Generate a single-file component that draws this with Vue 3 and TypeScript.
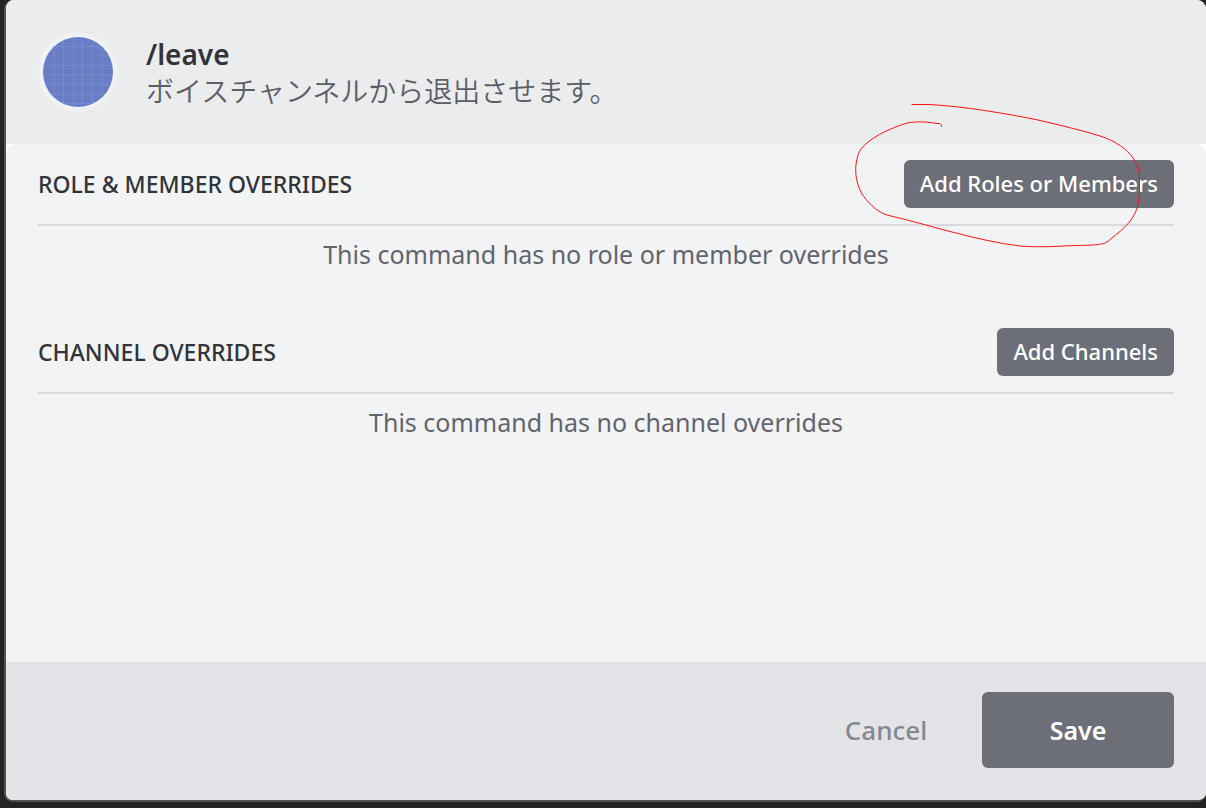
<script setup lang="ts">
import { ref } from 'vue'

interface OverrideSection {
  id: string
  title: string
  action: string
  empty: string
}

const command = ref({ name: '/leave', description: 'ボイスチャンネルから退出させます。' })

const sections: OverrideSection[] = [
  {
    id: 'roles',
    title: 'ROLE & MEMBER OVERRIDES',
    action: 'Add Roles or Members',
    empty: 'This command has no role or member overrides',
  },
  {
    id: 'channels',
    title: 'CHANNEL OVERRIDES',
    action: 'Add Channels',
    empty: 'This command has no channel overrides',
  },
]
</script>

<template>
  <div class="backdrop">
    <div class="dialog" role="dialog" aria-labelledby="command-name">
      <header class="header">
        <svg class="avatar" viewBox="0 0 80 80" aria-hidden="true">
          <defs>
            <clipPath id="avatar-clip"><circle cx="40" cy="40" r="35" /></clipPath>
          </defs>
          <circle cx="40" cy="40" r="39.5" fill="#eff1f4" />
          <g clip-path="url(#avatar-clip)">
            <rect width="80" height="80" fill="#687dc6" />
            <path
              d="M16 0V80M25.5 0V80M35.5 0V80M44.5 0V80M54.5 0V80M64 0V80M0 14.500H80M0 24H80M0 33.500H80M0 43H80M0 52.500H80M0 62H80M0 71.500H80"
              fill="none"
              stroke="#7a8dcc"
              stroke-opacity="0.8"
            />
          </g>
        </svg>
        <div class="heading">
          <h1 id="command-name" class="name">{{ command.name }}</h1>
          <p class="description" lang="ja">{{ command.description }}</p>
        </div>
      </header>

      <main class="body">
        <div class="content">
          <section v-for="section in sections" :key="section.id" class="section">
            <div class="section-head">
              <h2 class="section-title">{{ section.title }}</h2>
              <button type="button" class="button small">{{ section.action }}</button>
            </div>
            <p class="empty">{{ section.empty }}</p>
          </section>
        </div>
      </main>

      <footer class="footer">
        <button type="button" class="button cancel">Cancel</button>
        <button type="button" class="button save">Save</button>
      </footer>

      <svg class="scribble" viewBox="0 0 300 150" aria-hidden="true">
        <path
          d="M61.500 6.500H79C112 8 159 16 188 22C209 27 231 32 250 38C272 45 283 57 288 69Q289.500 73 289.500 79V94C289 106 287 112 283 119C276 130 264 138 257 144C252 148 231 147 214 148C198 149 181 149 170 148C127 143 76 126 37 117C26 114 16 102 12 96C5 83 4 70 8 57C13 41 44 29 57 25C69 23 78 24 87 25.500Q92 25 91.500 29"
        />
      </svg>
    </div>
  </div>
</template>

<style>
body {
  background: #232323;
}
</style>

<style scoped>
.backdrop {
  display: flex;
  box-sizing: border-box;
  min-height: 100vh;
  padding: 0 0 6px 4px;
  overflow: hidden;
  background: #232323;
  font-family: 'Noto Sans', 'Noto Sans CJK JP', sans-serif;
}

.dialog {
  position: relative;
  flex: 1;
  display: flex;
  flex-direction: column;
  border-left: 2px solid #525253;
  border-bottom: 2px solid #525253;
  border-radius: 9px;
  overflow: hidden;
  background: #fff;
}

.header {
  display: flex;
  align-items: center;
  gap: 28px;
  height: 144px;
  padding: 0 32px;
  background: #ebecee;
}

.avatar {
  width: 80px;
  height: 80px;
}

.name,
.description,
.section-title,
.empty {
  margin: 0;
}

.name {
  color: #313338;
  font-size: 28px;
  font-weight: 600;
  line-height: 36px;
}

.description {
  color: #5c5e66;
  font-family: 'Noto Sans CJK JP', sans-serif;
  font-size: 28px;
  font-weight: 350;
  line-height: 36px;
}

.body {
  flex: 1;
  display: flex;
}

.content {
  flex: 1;
  padding: 16px 32px;
  border-radius: 10px 10px 0 0;
  background: #f2f3f5;
}

.section {
  margin-bottom: 56px;
}

.section-head {
  display: flex;
  align-items: center;
  justify-content: space-between;
  padding-bottom: 16px;
  border-bottom: 2px solid #d7d9df;
}

.section-title {
  color: #313338;
  font-size: 23px;
  font-weight: 500;
  line-height: 32px;
}

.empty {
  padding: 11px 0 1px;
  color: #62646c;
  font-size: 25px;
  font-weight: 400;
  line-height: 34px;
  text-align: center;
}

.button {
  border: 0;
  border-radius: 6px;
  background: #6d6f78;
  color: #fff;
  font-family: inherit;
  font-weight: 500;
  cursor: pointer;
}

.small {
  height: 48px;
  padding: 0 16px 2px;
  font-size: 22px;
}

.footer {
  display: flex;
  justify-content: flex-end;
  padding: 30px 32px 32px;
  background: #e3e4e8;
}

.cancel,
.save {
  width: 192px;
  height: 76px;
  font-size: 26px;
}

.cancel {
  background: none;
  color: #858892;
}

.save {
  font-size: 25px;
  font-weight: 600;
}

.scribble {
  position: absolute;
  top: 98px;
  right: 56px;
  width: 300px;
  height: 150px;
  pointer-events: none;
}

.scribble path {
  fill: none;
  stroke: #f11;
  stroke-width: 1;
}
</style>
